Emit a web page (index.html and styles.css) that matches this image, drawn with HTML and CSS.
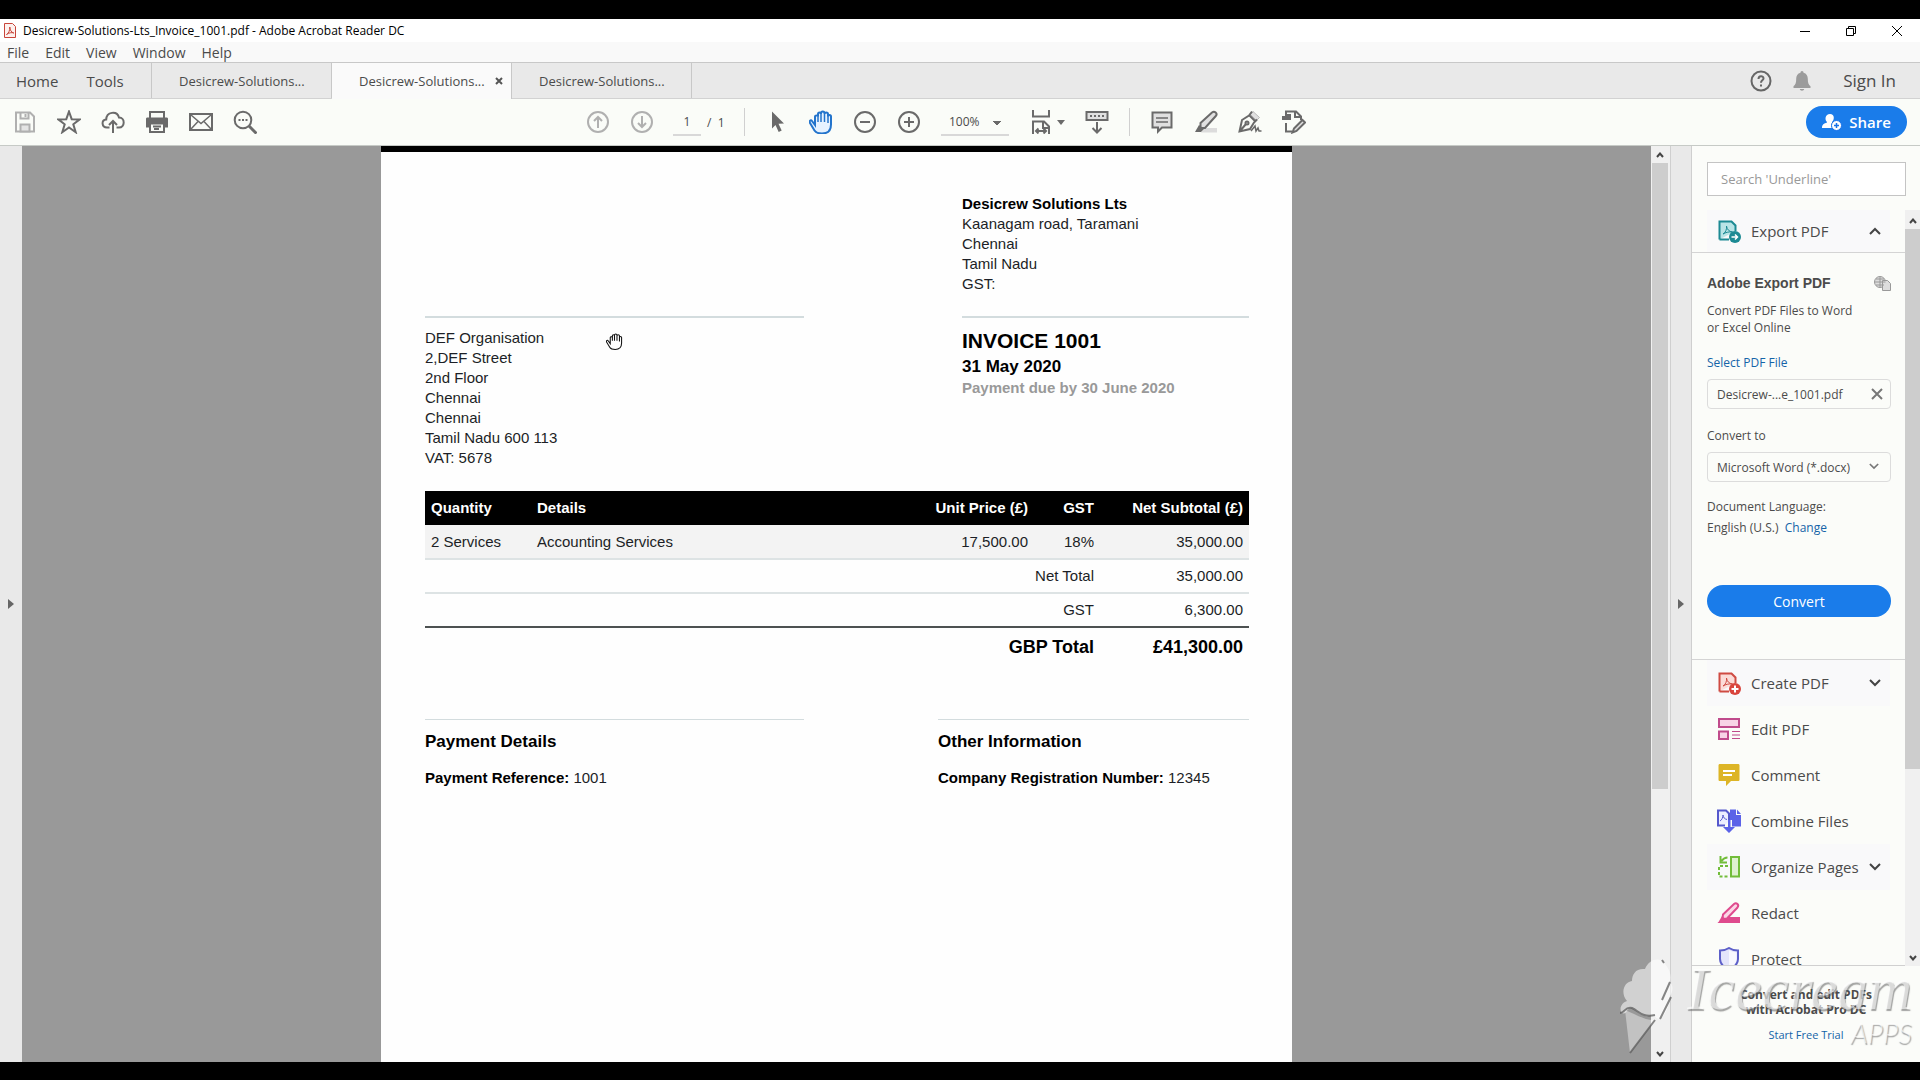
FILE: index.html
```html
<!DOCTYPE html>
<html lang="en">
<head>
    <meta charset="UTF-8">
    <title>Desicrew-Solutions-Lts_Invoice_1001.pdf - Adobe Acrobat Reader DC</title>
    <link rel="stylesheet" href="styles.css">
</head>
<body>

    <header class="title-bar">
        <svg class="app-icon" viewBox="0 0 12 15" width="12" height="15" fill="none" stroke="#c8453a">
            <path d="M.5.5h8l3 3v11H.5z" fill="#fdf1ee"/>
            <path d="M2.500 11.500c2-1 3.500-4 3.300-7.500.2 3 1.500 5.500 4 6-2-.8-5-.3-7.300 1.500z"/>
        </svg>
        <span class="title">Desicrew-Solutions-Lts_Invoice_1001.pdf - Adobe Acrobat Reader DC</span>
        <button class="win-btn" aria-label="Minimize"><svg viewBox="0 0 12 12" width="12" height="12" stroke="#000" fill="none"><path d="M1 6.500h10"/></svg></button>
        <button class="win-btn" aria-label="Restore"><svg viewBox="0 0 12 12" width="12" height="12" stroke="#000" fill="none"><path d="M1.500 3.500h7v7h-7zM3.500 3.500v-2h7v7h-2"/></svg></button>
        <button class="win-btn" aria-label="Close"><svg viewBox="0 0 12 12" width="12" height="12" stroke="#000" fill="none"><path d="M1 1l10 10M11 1L1 11"/></svg></button>
    </header>

    <nav class="menu-bar">
        <button>File</button>
        <button>Edit</button>
        <button>View</button>
        <button>Window</button>
        <button>Help</button>
    </nav>

    <div class="tab-bar">
        <div class="main-tabs">
            <button>Home</button>
            <button>Tools</button>
        </div>
        <div class="doc-tab"><button>Desicrew-Solutions...</button></div>
        <div class="doc-tab active">
            <button>Desicrew-Solutions...</button>
            <button class="tab-close" aria-label="Close tab"><svg viewBox="0 0 8 8" width="8" height="8" stroke="#555" stroke-width="2"><path d="M1 1l6 6M7 1L1 7"/></svg></button>
        </div>
        <div class="doc-tab"><button>Desicrew-Solutions...</button></div>
        <div class="account">
            <button aria-label="Help"><svg viewBox="0 0 22 22" width="22" height="22" fill="none" stroke="#666" stroke-width="2"><circle cx="11" cy="11" r="9.500"/><path d="M8.500 9c0-3.500 5-3.500 5-.5 0 1.800-2.500 2-2.500 4.200M11 14.500v2"/></svg></button>
            <button aria-label="Notifications"><svg viewBox="0 0 18 20" width="18" height="20" fill="#9b9b9b"><path d="M9 0c1 0 1.500.8 1.500 1.800 3 .7 4.300 3 4.300 6 0 4.200.7 6 2.700 7.500V17H.5v-1.700c2-1.500 2.700-3.300 2.700-7.500 0-3 1.300-5.300 4.300-6C7.500.8 8 0 9 0zM6.800 18h4.400c-.3 2.300-4.100 2.300-4.400 0z"/></svg></button>
            <button class="sign-in">Sign In</button>
        </div>
    </div>

    <div class="toolbar">
        <div class="tool-group">
            <button class="tool faded" aria-label="Save"><svg viewBox="0 0 24 24"><path d="M3 2.500h14l4 4v15H3zM7.500 2.500v6h8v-6M12.500 4v3"/><path d="M7.500 21.500v-7h9v7z" fill="#e4e4e4"/></svg></button>
            <button class="tool" aria-label="Star"><svg viewBox="0 0 24 24"><path d="M12 1.500l2.700 7.700 8 .2-6.400 4.900 2.400 7.900L12 17.500l-6.700 4.700 2.400-7.900-6.400-4.900 8-.2z"/></svg></button>
            <button class="tool" aria-label="Upload to cloud"><svg viewBox="0 0 24 24"><path d="M8.500 17.500H6c-5.500 0-6-7.500-.8-8C5.500 1.500 16 .5 18 7.500c6.500.3 6 10 0 10h-2.500M12 23V11.500M8 15l4-4 4 4"/></svg></button>
            <button class="tool" aria-label="Print"><svg viewBox="0 0 24 24"><path d="M5 8V2h14v6"/><path d="M2.500 7.500h19c1 0 1.500.5 1.500 1.500v8.500h-4V14H5v3.500H1V9c0-1 .5-1.500 1.500-1.500z" fill="#6a6a6a" stroke="none"/><path d="M5 13.500h14V22H5zM8 16.500h8M9 19h5"/></svg></button>
            <button class="tool" aria-label="Email"><svg viewBox="0 0 24 24"><path d="M1 4h22v16H1z"/><path d="M2 5l10 8.500L22 5M2 19l7-7.500M22 19l-7-7.500" stroke-width="1.500"/></svg></button>
            <button class="tool" aria-label="Search"><svg viewBox="0 0 24 24"><circle cx="10" cy="10" r="8.300"/><path d="M16 16l7.500 7.500" stroke-width="3"/><path d="M5.500 10h2M9 10h2M12.500 10h2"/></svg></button>
        </div>

        <div class="tool-group">
            <button class="tool faded" aria-label="Previous page"><svg viewBox="0 0 24 24"><circle cx="12" cy="12" r="10"/><path d="M12 18V7M8 11l4-4 4 4"/></svg></button>
            <button class="tool faded" aria-label="Next page"><svg viewBox="0 0 24 24"><circle cx="12" cy="12" r="10"/><path d="M12 6v11M8 13l4 4 4-4"/></svg></button>
            <input class="page-no" type="text" value="1" aria-label="Page number">
            <span class="page-count">/&nbsp; 1</span>
            <span class="sep"></span>
            <button class="tool" aria-label="Select"><svg viewBox="0 0 24 24"><path d="M7 1.500l12 12-5.500.3 3.200 6.700-3 1.500-3.200-7L7 18.500z" fill="#6a6a6a" stroke="none"/></svg></button>
            <button class="tool hand" aria-label="Hand"><svg viewBox="0 0 24 24"><path d="M6 15L3 11c-1.300-1.700-3.200.2-2 2l4.500 7.500C7 23 9 23.500 13 23.500c6 0 9-3.500 9-9V6.500c0-2-3-2-3 0V4c0-2-3.500-2-3.500 0V3c0-2-3.500-2-3.500 0v1c0-2-3-2-3 0v2.500c0-1.500-3-1.500-3 0z" fill="#e6f2ff"/><path d="M9 5v7M12 4v8M15.500 4v8M19 6v7" stroke-width="1.500"/></svg></button>
            <button class="tool" aria-label="Zoom out"><svg viewBox="0 0 24 24"><circle cx="12" cy="12" r="10"/><path d="M7 12h10"/></svg></button>
            <button class="tool" aria-label="Zoom in"><svg viewBox="0 0 24 24"><circle cx="12" cy="12" r="10"/><path d="M7 12h10M12 7v10"/></svg></button>
            <select class="zoom-level" aria-label="Zoom level"><option>100%</option></select>
            <button class="tool fit" aria-label="Fit page"><svg viewBox="0 0 24 24"><path d="M4 0v6.500h16V0M4 24V11.500h11l5 5V24M14 12v6h6M7 21h10M9.500 18.500L7 21l2.500 2.500M14.500 18.500L17 21l-2.500 2.500"/></svg><svg class="caret" viewBox="0 0 8 5"><path d="M0 0h8L4 5z"/></svg></button>
            <button class="tool" aria-label="Scrolling"><svg viewBox="0 0 24 24"><path d="M1.500 2h21v8h-21z" fill="#e0e0e0"/><path d="M5 6h2M9 6h2M13 6h2M17 6h2M12 12v10M7.500 18l4.500 4.500 4.500-4.500"/></svg></button>
            <span class="sep"></span>
            <button class="tool" aria-label="Comment"><svg viewBox="0 0 24 24"><path d="M2.500 2.500h19v15H12L8 21.500v-4H2.500z" fill="#e0e0e0"/><path d="M6 8h12M6 12h12" stroke-width="1.500"/></svg></button>
            <button class="tool" aria-label="Highlight"><svg viewBox="0 0 24 24"><path d="M11 18h12v4.500H7z" fill="#dcdcdc" stroke="none"/><path d="M6.500 13L18 2.500c2.500-2 6 1 3.800 3.500L11 18H6.500z" fill="#e0e0e0"/><path d="M5 15l5 4-3 3H1z" fill="#6a6a6a" stroke="none"/></svg></button>
            <button class="tool" aria-label="Sign"><svg viewBox="0 0 24 24"><path d="M15 1.500l6.500 6-3 3-6-6z" fill="#e0e0e0" stroke="#bbb" stroke-width="1"/><path d="M14 1.500l-3 4-7 4.500-2.500 11.500L12 19l4-6.500 3-3M11.500 5.500l6 6M2 21l6-7"/><circle cx="9" cy="13" r="1.500"/><path d="M13 21l4-5 1 5 2-3 1 3h2.500" stroke-width="1.500"/></svg></button>
            <button class="tool" aria-label="Fill and sign"><svg viewBox="0 0 24 24"><path d="M0 6h3V4h6v6H0z" fill="#6a6a6a" stroke="none"/><path d="M4 4V1.500h10l5 5V10M13 2v5h6M4 13v8.500h6"/><path d="M12 18.500L20.500 10l2.500 2.500-8.500 8.500-4 1.500z" fill="#e0e0e0"/></svg></button>
        </div>

        <div class="tool-group right">
            <button class="share">
                <svg viewBox="0 0 20 18" width="20" height="18"><path d="M8 1c5 0 4.500 6 2 8v1c-1 1.500-1 3 0 5H0c0-3.500 2-4.500 5-5.500V9C2.500 7 3 1 8 1z" fill="#fff"/><circle cx="14.500" cy="12.500" r="5" fill="#fff" stroke="#1a73e8"/><path d="M12 12.500h5M14.500 10v5" stroke="#1a73e8" stroke-width="1.500"/></svg>
                Share
            </button>
        </div>
    </div>

    <main class="workspace">
        <button class="strip" aria-label="Open left panel"><svg viewBox="0 0 6 10" width="6" height="10" fill="#666"><path d="M0 0l6 5-6 5z"/></svg></button>

        <div class="canvas">
            <article class="page">
                <div class="columns top">
                    <div class="client">
                        <hr>
                        <address>
                            DEF Organisation<br>
                            2,DEF Street<br>
                            2nd Floor<br>
                            Chennai<br>
                            Chennai<br>
                            Tamil Nadu 600 113<br>
                            VAT: 5678
                        </address>
                    </div>
                    <div class="company">
                        <address>
                            <b>Desicrew Solutions Lts</b><br>
                            Kaanagam road, Taramani<br>
                            Chennai<br>
                            Tamil Nadu<br>
                            GST:
                        </address>
                        <hr>
                        <h1>INVOICE 1001</h1>
                        <p class="date">31 May 2020</p>
                        <p class="due">Payment due by 30 June 2020</p>
                    </div>
                </div>

                <table class="lines">
                    <thead>
                        <tr><th class="qty">Quantity</th><th>Details</th><th class="num unit">Unit Price (£)</th><th class="num gst">GST</th><th class="num net">Net Subtotal (£)</th></tr>
                    </thead>
                    <tbody>
                        <tr class="item"><td>2 Services</td><td>Accounting Services</td><td class="num">17,500.00</td><td class="num">18%</td><td class="num">35,000.00</td></tr>
                        <tr><td class="num" colspan="4">Net Total</td><td class="num">35,000.00</td></tr>
                        <tr class="last"><td class="num" colspan="4">GST</td><td class="num">6,300.00</td></tr>
                        <tr class="total"><td class="num" colspan="4">GBP Total</td><td class="num">£41,300.00</td></tr>
                    </tbody>
                </table>

                <div class="columns bottom">
                    <section class="payment">
                        <h2>Payment Details</h2>
                        <p><b>Payment Reference:</b> 1001</p>
                    </section>
                    <section class="other">
                        <h2>Other Information</h2>
                        <p><b>Company Registration Number:</b> 12345</p>
                    </section>
                </div>
            </article>

            <!-- hand cursor over the page -->
            <svg class="cursor" viewBox="0 0 24 24" width="17" height="17" fill="#fff" stroke="#111" stroke-width="1.500"><path d="M6 15L3 11c-1.300-1.700-3.200.2-2 2l4.500 7.500C7 23 9 23.200 13 23.200c6 0 9-3.500 9-9V6.500c0-2-3-2-3 0V4c0-2-3.500-2-3.500 0V3c0-2-3.500-2-3.500 0v1c0-2-3-2-3 0v2.500c0-1.500-3-1.500-3 0zM9 5v6M12 4v7M15.500 4v7M19 6v6"/></svg>
        </div>

        <div class="scrollbar">
            <button aria-label="Scroll up"><svg viewBox="0 0 8 6" width="8" height="6"><path d="M1 5l3-3.500L7 5"/></svg></button>
            <div class="track"><div class="thumb page-thumb"></div></div>
            <button aria-label="Scroll down"><svg viewBox="0 0 8 6" width="8" height="6"><path d="M1 1l3 3.500L7 1"/></svg></button>
        </div>

        <button class="strip right-strip" aria-label="Hide tools panel"><svg viewBox="0 0 6 10" width="6" height="10" fill="#666"><path d="M0 0l6 5-6 5z"/></svg></button>

        <aside class="tools-panel">
            <div class="search"><input type="text" placeholder="Search 'Underline'" aria-label="Search tools"></div>
            <div class="panel-body">
                <div class="panel-list">
                    <button class="tool-row shaded first">
                        <svg viewBox="0 0 24 24"><path d="M2.500 20.500v-18h12l4 4V12M2.500 20.500H12" fill="#b9e4e6" stroke="#1c8a93" stroke-width="2"/><path d="M6 15c2.500-1 4-5 3.500-8 .5 3.500 2.500 5.500 6 6-4-.5-7 .5-9.500 2z" fill="none" stroke="#1c8a93"/><circle cx="18" cy="18" r="6" fill="#1c8a93"/><path d="M14.500 18h6M18 15.500l2.500 2.500-2.500 2.500" fill="none" stroke="#fff" stroke-width="1.500"/></svg>
                        <span>Export PDF</span>
                        <svg class="chev" viewBox="0 0 12 8"><path d="M1 7l5-5 5 5"/></svg>
                    </button>

                    <form class="export">
                        <div class="export-head">
                            <h3>Adobe Export PDF</h3>
                            <svg viewBox="0 0 17 15" width="17" height="15" fill="#ddd" stroke="#999"><circle cx="6" cy="6" r="5.500"/><path d="M.5 6h11M6 .5v11M2 3h8M2 9h8M8.500 4.500h5l3 3v7h-8z"/></svg>
                        </div>
                        <p class="info">Convert PDF Files to Word<br>or Excel Online</p>
                        <a href="#" class="select-file">Select PDF File</a>
                        <div class="field file">
                            <span>Desicrew-...e_1001.pdf</span>
                            <button type="button" aria-label="Remove file"><svg viewBox="0 0 12 12" width="12" height="12" stroke="#777" stroke-width="2"><path d="M1 1l10 10M11 1L1 11"/></svg></button>
                        </div>
                        <label for="format">Convert to</label>
                        <div class="format-box">
                            <select class="field" id="format"><option>Microsoft Word (*.docx)</option></select>
                            <svg viewBox="0 0 12 8" width="10" height="7" fill="none" stroke="#777" stroke-width="2"><path d="M1 1l5 5 5-5"/></svg>
                        </div>
                        <p class="lang">Document Language:<br>English (U.S.) &nbsp;<a href="#">Change</a></p>
                        <button type="button" class="convert">Convert</button>
                    </form>

                    <button class="tool-row shaded">
                        <svg viewBox="0 0 24 24"><path d="M2.500 20.500v-18h12l4 4V12M2.500 20.500H12" fill="#fbdcd8" stroke="#cf4b42" stroke-width="2"/><path d="M6 15c2.500-1 4-5 3.500-8 .5 3.500 2.500 5.500 6 6-4-.5-7 .5-9.500 2z" fill="none" stroke="#cf4b42"/><circle cx="18" cy="18" r="6" fill="#d9453d"/><path d="M14.500 18h7M18 14.500v7" stroke="#fff" stroke-width="2"/></svg>
                        <span>Create PDF</span>
                        <svg class="chev" viewBox="0 0 12 8"><path d="M1 1l5 5 5-5"/></svg>
                    </button>
                    <button class="tool-row">
                        <svg viewBox="0 0 24 24" fill="#f8d3e6" stroke="#c04b8c" stroke-width="2"><path d="M2 2h20v8H2zM2 14.500h9V22H2z"/><path d="M15 14.500h8M15 18h8M15 21.500h8" stroke-width="1"/></svg>
                        <span>Edit PDF</span>
                    </button>
                    <button class="tool-row">
                        <svg viewBox="0 0 24 24"><path d="M3 1h18c1 0 1.500.5 1.500 1.500v14c0 1-.5 1.500-1.500 1.500h-7l-5 5v-5H3c-1 0-1.500-.5-1.500-1.500v-14C1.500 1.500 2 1 3 1z" fill="#ddb526"/><path d="M6 8h12M6 12h9" stroke="#fff" stroke-width="2"/></svg>
                        <span>Comment</span>
                    </button>
                    <button class="tool-row">
                        <svg viewBox="0 0 24 24"><path d="M8 16.500H1v-15h8l3 3v7" fill="#eceeff" stroke="#5558cc" stroke-width="2"/><path d="M3 12c2-1 3-4 3-6 .3 2.500 1.500 4 4 4.500" fill="none" stroke="#5558cc"/><path d="M13 .5h6V6h5v11.500h-9V11h-2zM20 .5L24 5h-4zM11 11h2.500v7H18l-6 6-6-6h5z" fill="#5b62e8"/></svg>
                        <span>Combine Files</span>
                    </button>
                    <button class="tool-row shaded">
                        <svg viewBox="0 0 24 24" fill="none" stroke="#72bd3a" stroke-width="2"><path d="M14 2h8v19.500h-8z" fill="#dff1d0"/><path d="M11 11H2v10.500h9" stroke-dasharray="3 2"/><path d="M10.500 2.500C8 2.500 6 4 4.500 6M3.500 1v6.500H10"/></svg>
                        <span>Organize Pages</span>
                        <svg class="chev" viewBox="0 0 12 8"><path d="M1 1l5 5 5-5"/></svg>
                    </button>
                    <button class="tool-row">
                        <svg viewBox="0 0 24 24"><path d="M11 17h11v4H4z" fill="#df4b8e" stroke="#df4b8e" stroke-width="2"/><path d="M6 13.500L17 3c2.500-2 5.500 1 3.500 3.500L10 17.500 5.500 18z" fill="#fbd7e6" stroke="#df4b8e" stroke-width="2"/><path d="M5 15l4 4-2 3H1z" fill="#df4b8e"/></svg>
                        <span>Redact</span>
                    </button>
                    <button class="tool-row">
                        <svg viewBox="0 0 24 24"><path d="M12 1c3 2 6 2.500 9 2.500V12c0 5.500-4 8.500-9 11-5-2.500-9-5.500-9-11V3.500C6 3.500 9 3 12 1z" fill="#e4e5fb" stroke="#5c5fc9" stroke-width="2"/><path d="M12 3c2.500 1.500 5 2 7.500 2.500V12c0 4.500-3.500 7-7.500 9.500z" fill="#f8f8ff"/></svg>
                        <span>Protect</span>
                    </button>
                </div>
                <div class="scrollbar slim">
                    <button aria-label="Scroll up"><svg viewBox="0 0 8 6" width="8" height="6"><path d="M1 5l3-3.500L7 5"/></svg></button>
                    <div class="track"><div class="thumb panel-thumb"></div></div>
                    <button aria-label="Scroll down"><svg viewBox="0 0 8 6" width="8" height="6"><path d="M1 1l3 3.500L7 1"/></svg></button>
                </div>
            </div>
            <div class="promo">
                <strong>Convert and edit PDFs<br>with Acrobat Pro DC</strong>
                <a href="#">Start Free Trial</a>
            </div>
        </aside>
    </main>

    <!-- recorder watermark -->
    <div class="watermark">
        <svg viewBox="0 0 54 98" width="54" height="98">
            <path d="M3 55C-1 50 4 44 8 43 1 35 5 24 13 23c0-7 4-13 13-12C29 3 36 0 42 2l3 3c5 5 8 12 6 19 4 4 3 11-1 15 1 8-3 17-9 22-5 0-5-5-9-4-7 5-14-5-20-7-5 1-4 7-9 5z" fill="#fff" fill-opacity=".55"/>
            <path d="M6 52l5 43 25-33c-9 1-20-6-30-10z" fill="#fff" fill-opacity=".4"/>
            <path d="M1 55c5 0 5-7 12-5 7 3 10 10 23 7M36 62L11 95M43 2l2 3M51 24l-8 18M52 39l-11 22" fill="none" stroke="#555" stroke-opacity=".7" stroke-width="2"/>
        </svg>
        <div class="watermark-text">
            <span class="brand">Icecream</span>
            <span class="apps">APPS</span>
        </div>
    </div>

</body>
</html>
```
FILE: styles.css
```css
* {
    box-sizing: border-box;
}

body {
    margin: 0;
    height: 100vh;
    display: flex;
    flex-direction: column;
    overflow: hidden;
    border-top: 19px solid #000;
    border-bottom: 18px solid #000;
    background: #fcfdf9;
    color: #4b4b4b;
    font-family: "Open Sans", "Noto Sans", sans-serif;
    font-size: 12px;
}

button, input, select {
    font: inherit;
    color: inherit;
    margin: 0;
    padding: 0;
    border: none;
    background: none;
}

button {
    display: flex;
    align-items: center;
    justify-content: center;
    white-space: nowrap;
}

h1, h2, h3, p {
    margin: 0;
}

svg {
    display: block;
    flex: none;
}

a {
    color: #1564a8;
    text-decoration: none;
}

/* title and menu */
.title-bar {
    display: flex;
    align-items: center;
    height: 23px;
    padding-left: 4px;
    background: #fff;
    color: #000;
    flex: none;
}

.title {
    flex: 1;
    margin-left: 7px;
}

.win-btn {
    width: 46px;
    height: 23px;
}

.menu-bar {
    display: flex;
    gap: 16px;
    height: 20px;
    padding-left: 7px;
    background: #f9f9f9;
    font-size: 14px;
    flex: none;
}

/* tabs */
.tab-bar {
    display: flex;
    height: 37px;
    border-top: 1px solid #c8c8c8;
    border-bottom: 1px solid #d2d2d2;
    background: #e9e9e9;
    flex: none;
}

.main-tabs {
    display: flex;
    gap: 28px;
    width: 152px;
    padding-left: 16px;
    border-right: 1px solid #c8c8c8;
    font-size: 15px;
}

.doc-tab {
    display: flex;
    align-items: center;
    width: 180px;
    padding-left: 27px;
    border-right: 1px solid #c8c8c8;
    font-size: 13px;
}

.doc-tab.active {
    background: #fafafa;
    margin-bottom: -1px;
}

.tab-close {
    margin-left: 10px;
}

.account {
    display: flex;
    align-items: center;
    margin-left: auto;
    padding-right: 24px;
    gap: 21px;
}

.sign-in {
    margin-left: 11px;
    font-size: 17px;
    font-weight: 500;
}

/* toolbar */
.toolbar {
    display: grid;
    grid-template-columns: 30% auto 1fr;
    height: 47px;
    border-bottom: 1px solid #c6cac6;
    background: #fafcf8;
    flex: none;
}

.tool-group {
    display: flex;
    align-items: center;
    padding-left: 3px;
}

.tool-group + .tool-group {
    padding-left: 0;
}

.tool-group.right {
    justify-content: flex-end;
    padding-right: 13px;
}

.tool {
    width: 44px;
    height: 40px;
}

.tool svg {
    width: 24px;
    height: 24px;
    fill: none;
    stroke: #6a6a6a;
    stroke-width: 2;
}

.tool.faded svg {
    stroke: #b0b0b0;
}

.tool.hand svg {
    stroke: #2374cc;
}

.tool.fit {
    width: 56px;
    margin-left: 10px;
    gap: 4px;
}

.tool .caret {
    width: 8px;
    height: 5px;
    fill: #6a6a6a;
    stroke: none;
}

.page-no {
    width: 28px;
    height: 28px;
    margin-left: 9px;
    border-bottom: 2px solid #d8d8d8;
    text-align: center;
}

.page-count {
    margin-left: 6px;
    width: 37px;
}

.sep {
    width: 1px;
    height: 28px;
    margin: 0 10px;
    background: #d0d0d0;
}

.page-count + .sep {
    margin-left: 0;
}

.zoom-level {
    appearance: none;
    width: 68px;
    height: 28px;
    margin-left: 10px;
    padding-left: 8px;
    border-bottom: 2px solid #d8d8d8;
    background: linear-gradient(to bottom right, #6a6a6a 50%, transparent 50%) 56px 13px / 4px 5px no-repeat,
                linear-gradient(to bottom left, #6a6a6a 50%, transparent 50%) 52px 13px / 4px 5px no-repeat;
}

.share {
    gap: 7px;
    width: 101px;
    height: 32px;
    border-radius: 16px;
    background: #1a7cea;
    color: #fff;
    font-size: 15px;
    font-weight: 600;
}

/* workspace */
.workspace {
    display: flex;
    flex: 1;
    min-height: 0;
}

.strip {
    width: 22px;
    background: #e9e9e9;
    flex: none;
}

.right-strip {
    border-left: 1px solid #cfcfcf;
    border-right: 1px solid #cfcfcf;
}

.canvas {
    position: relative;
    display: flex;
    justify-content: center;
    flex: 1;
    background: #999;
    overflow: hidden;
}

.cursor {
    position: absolute;
    left: 584px;
    top: 187px;
}

.scrollbar {
    display: flex;
    flex-direction: column;
    width: 19px;
    padding: 0 2px 0 1px;
    background: #f0f0f0;
    flex: none;
}

.scrollbar button {
    height: 17px;
    flex: none;
}

.scrollbar svg {
    fill: none;
    stroke: #444;
    stroke-width: 2;
}

.track {
    flex: 1;
}

.thumb {
    background: #cdcdcd;
}

.page-thumb {
    height: 71%;
}

.panel-thumb {
    height: 75%;
}

.scrollbar.slim {
    width: 15px;
    padding: 2px 0 0;
}

/* invoice */
.page {
    width: 911px;
    padding: 42px 43px 0 44px;
    border-top: 6px solid #000;
    background: #fefefe;
    color: #1c1f26;
    font-family: "Liberation Sans", Arial, sans-serif;
    font-size: 15px;
    line-height: 20px;
}

.page address {
    font-style: normal;
}

.page b, .page h1, .page h2, .date {
    color: #000;
}

.page hr {
    margin: 0;
    border: none;
    border-top: 2px solid #d3dcde;
}

.columns {
    display: flex;
    justify-content: space-between;
}

.top {
    align-items: flex-end;
    height: 274px;
}

.client {
    width: 379px;
}

.client hr, .company hr {
    margin-bottom: 10px;
}

.company {
    width: 287px;
    align-self: flex-start;
}

.company address {
    height: 122px;
}

.page h1 {
    font-size: 21px;
    line-height: 26px;
}

.date {
    font-size: 17px;
    line-height: 26px;
    font-weight: bold;
}

.due {
    line-height: 16px;
    font-weight: bold;
    color: #999;
}

.lines {
    width: 100%;
    margin-top: 23px;
    border-collapse: collapse;
    table-layout: fixed;
}

.lines th, .lines td {
    height: 34px;
    padding: 0 6px;
    text-align: left;
    border-bottom: 2px solid #dde3e4;
}

.lines th {
    background: #000;
    color: #fff;
    border-bottom: none;
}

.lines .num {
    text-align: right;
}

.qty {
    width: 106px;
}

.unit {
    width: 120px;
}

.gst {
    width: 66px;
}

.net {
    width: 149px;
}

.lines .item {
    background: #f3f3f3;
}

.lines .last td {
    border-bottom-color: #4d5252;
}

.lines .total td {
    height: 38px;
    border: none;
    color: #000;
    font-size: 18px;
    font-weight: bold;
}

.bottom {
    margin-top: 54px;
}

.bottom section {
    padding-top: 11px;
    border-top: 1px solid #d3dcde;
}

.payment {
    width: 379px;
}

.other {
    width: 311px;
}

.page h2 {
    margin-bottom: 15px;
    font-size: 17px;
    line-height: 22px;
}

/* right tools panel */
.tools-panel {
    display: flex;
    flex-direction: column;
    width: 228px;
    background: #fbfcf9;
    flex: none;
}

.search {
    padding: 16px 14px 14px 15px;
}

.search input {
    display: block;
    width: 100%;
    height: 34px;
    padding: 0 13px;
    border: 1px solid #c4c4c4;
    background: #fff;
    font-size: 13px;
}

.search input::placeholder {
    color: #999;
}

.panel-body {
    display: flex;
    flex: 1;
    min-height: 0;
}

.panel-list {
    flex: 1;
    overflow: hidden;
    border-bottom: 1px solid #d0d0d0;
}

.tool-row {
    width: calc(100% - 30px);
    height: 46px;
    margin-left: 15px;
    padding: 0 9px 0 10px;
    gap: 10px;
    font-size: 15px;
    text-align: left;
}

.tool-row span {
    flex: 1;
}

.tool-row svg {
    width: 24px;
    height: 24px;
}

.tool-row .chev {
    width: 12px;
    height: 8px;
    margin-left: -10px;
    fill: none;
    stroke: #444;
    stroke-width: 2;
}

.tool-row.shaded {
    background: #f9f9fa;
}

.tool-row.first {
    height: 42px;
}

.export {
    height: 408px;
    padding: 19px 14px 0 15px;
    border-top: 1px solid #d4d4d4;
    border-bottom: 1px solid #d4d4d4;
}

.export-head {
    display: flex;
    align-items: center;
    justify-content: space-between;
}

.export h3 {
    font-family: "Liberation Sans", Arial, sans-serif;
    font-size: 14px;
    line-height: 22px;
}

.info {
    margin-top: 8px;
    line-height: 17px;
}

.select-file {
    display: block;
    margin-top: 18px;
    line-height: 18px;
}

.field {
    width: 100%;
    height: 30px;
    padding: 0 9px;
    border: 1px solid #dcdcdc;
    border-radius: 4px;
}

.file {
    display: flex;
    align-items: center;
    justify-content: space-between;
    margin-top: 7px;
    padding-right: 7px;
}

.export label {
    display: block;
    margin-top: 18px;
    line-height: 18px;
}

.format-box {
    position: relative;
    margin-top: 7px;
}

.format-box select {
    display: block;
    appearance: none;
}

.format-box svg {
    position: absolute;
    right: 12px;
    top: 11px;
}

.lang {
    margin-top: 14px;
    line-height: 21px;
}

.convert {
    width: 100%;
    height: 32px;
    margin-top: 47px;
    border-radius: 16px;
    background: #1a7cea;
    color: #fff;
    font-size: 14px;
}

.promo {
    display: flex;
    flex-direction: column;
    align-items: center;
    height: 96px;
    padding-top: 21px;
    text-align: center;
    line-height: 15px;
}

.promo a {
    margin-top: 9px;
    font-size: 11px;
    line-height: 18px;
}

/* watermark */
.watermark {
    position: absolute;
    right: 8px;
    top: 958px;
    display: flex;
    gap: 14px;
    pointer-events: none;
}

.watermark-text {
    display: flex;
    flex-direction: column;
    align-items: flex-end;
    font-style: italic;
    color: rgba(255, 255, 255, 0.6);
    text-shadow: 1px 2px 1px rgba(90, 90, 90, 0.55);
}

.brand {
    font-family: "Liberation Serif", serif;
    font-size: 61px;
    line-height: 62px;
}

.apps {
    font-family: Lato, sans-serif;
    font-weight: 300;
    font-size: 28px;
    line-height: 24px;
}
```
